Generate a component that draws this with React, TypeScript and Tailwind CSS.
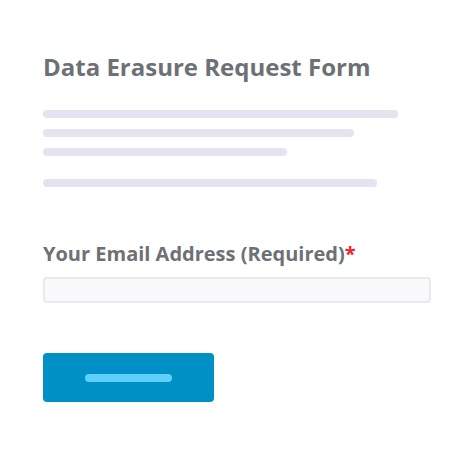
export default function App() {
  return (
    <div className="w-[474px] h-[452px] bg-white font-['Open_Sans',sans-serif]">
      <div className="pl-[43px] pt-[52px]">
        <h1 className="text-[24px] leading-[30px] font-bold text-[#6d7176]">Data Erasure Request Form</h1>

        {/* placeholder paragraph */}
        <div className="mt-[28px] flex flex-col gap-[11px]">
          <div className="h-[8px] w-[355px] rounded-full bg-[#e4e4f0]" />
          <div className="h-[8px] w-[311px] rounded-full bg-[#e4e4f0]" />
          <div className="h-[8px] w-[244px] rounded-full bg-[#e4e4f0]" />
        </div>
        <div className="mt-[23px] h-[8px] w-[334px] rounded-full bg-[#e4e4f0]" />

        <label className="mt-[54px] block text-[20px] leading-[26px] font-bold text-[#6d7176]">
          Your Email Address (Required)<span className="text-[#f2232a]">*</span>
        </label>
        <div className="mt-[10px] h-[26px] w-[388px] rounded-[4px] border-2 border-[#e8eaec] bg-[#f9f9fb]" />

        <button className="mt-[50px] flex h-[49px] w-[171px] items-center justify-center rounded-[4px] bg-[#0190c5]">
          <span className="h-[8px] w-[87px] rounded-full bg-[#5fd0fa]" />
        </button>
      </div>
    </div>
  );
}
